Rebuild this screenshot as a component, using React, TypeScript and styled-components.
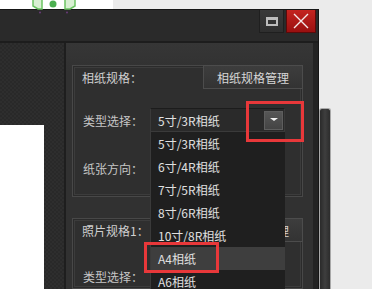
import styled, { createGlobalStyle } from "styled-components";

const GlobalStyle = createGlobalStyle`
  html, body {
    margin: 0;
    padding: 0;
  }
  body {
    background: #ececec;
    font-family: "Noto Sans CJK SC", "Noto Sans", sans-serif;
    font-size: 12px;
  }
`;

const paperSizes = [
  "5寸/3R相纸",
  "6寸/4R相纸",
  "7寸/5R相纸",
  "8寸/6R相纸",
  "10寸/8R相纸",
  "A4相纸",
  "A6相纸",
];

export default function App() {
  return (
    <>
      <GlobalStyle />
      <Desktop>
        <TopStrip>
          <WhiteArea />
        </TopStrip>
        <DesktopIcons width="50" height="15" viewBox="0 0 50 15">
          <path d="M3 0 V6 L8 9 H12 V0" fill="#d8f0d2" stroke="#6cc463" strokeWidth="1.5" />
          <circle cx="23" cy="4" r="3.5" fill="#4caf50" />
          <path d="M35 0 V9 H40 L45 6 V0" fill="#d8f0d2" stroke="#6cc463" strokeWidth="1.5" />
          <circle cx="10" cy="12.5" r="1" fill="#6a3c7a" />
          <circle cx="37" cy="12.5" r="1" fill="#6a3c7a" />
        </DesktopIcons>
        <Main>
          <Window>
            <TitleBar>
              <MaxButton>
                <MaxIcon />
              </MaxButton>
              <CloseButton>
                <svg width="16" height="16" viewBox="0 0 16 16">
                  <path d="M1 1 L15 15 M15 1 L1 15" stroke="#f4eaea" strokeWidth="1.4" />
                </svg>
              </CloseButton>
            </TitleBar>
            <Body>
              <Sidebar>
                <Preview />
              </Sidebar>
              <Panel>
                <GroupBox>
                  <GroupHeader>
                    <GroupTitle>相纸规格：</GroupTitle>
                    <TabButton>相纸规格管理</TabButton>
                  </GroupHeader>
                  <FieldRow $top={19}>
                    <Label>类型选择：</Label>
                    <Combo>
                      <ComboText>5寸/3R相纸</ComboText>
                      <ArrowButton>
                        <svg width="8" height="4" viewBox="0 0 8 4">
                          <path d="M0 0 H8 L4 3 Z" fill="#f0f0f0" />
                        </svg>
                      </ArrowButton>
                      <Highlight $left={95} $top={-8} $width={58} $height={41} />
                      <DropList>
                        {paperSizes.map((size) => (
                          <DropItem key={size} $selected={size === "A4相纸"}>
                            {size}
                            {size === "A4相纸" && (
                              <Highlight $left={-7} $top={-5} $width={75} $height={31} />
                            )}
                          </DropItem>
                        ))}
                      </DropList>
                    </Combo>
                  </FieldRow>
                  <FieldRow $top={24}>
                    <Label>纸张方向：</Label>
                  </FieldRow>
                </GroupBox>
                <GroupBox $second>
                  <GroupHeader>
                    <GroupTitle>照片规格1：</GroupTitle>
                    <TabButton>照片规格管理</TabButton>
                  </GroupHeader>
                  <FieldRow $top={22}>
                    <Label>类型选择：</Label>
                  </FieldRow>
                </GroupBox>
              </Panel>
            </Body>
          </Window>
          <Outside>
            <ScrollRail />
          </Outside>
        </Main>
      </Desktop>
    </>
  );
}

const Desktop = styled.div`
  position: relative;
  width: 372px;
  height: 289px;
  overflow: hidden;
  display: flex;
  flex-direction: column;
  background: #ebebeb;
`;

const TopStrip = styled.div`
  height: 9px;
  flex: none;
  display: flex;
`;

const WhiteArea = styled.div`
  width: 113px;
  background: #ffffff;
`;

const DesktopIcons = styled.svg`
  position: absolute;
  left: 30px;
  top: 0;
`;

const Main = styled.div`
  flex: 1;
  min-height: 0;
  display: flex;
`;

const Window = styled.div`
  width: 319px;
  flex: none;
  box-sizing: border-box;
  display: flex;
  flex-direction: column;
  background: #2a2a2a;
  border-top: 1px solid #161616;
  border-right: 1px solid #151515;
`;

const TitleBar = styled.div`
  height: 31px;
  flex: none;
  display: flex;
  justify-content: flex-end;
  align-items: flex-start;
  gap: 2px;
  padding-right: 2px;
  background: #2a2a2a;
  border-bottom: 2px solid #1d1d1d;
`;

const MaxButton = styled.div`
  width: 25px;
  height: 23px;
  box-sizing: border-box;
  display: flex;
  align-items: center;
  justify-content: center;
  background: linear-gradient(#3a3a3a, #2f2f2f);
  border: 1px solid #1f1f1f;
  border-top: none;
`;

const MaxIcon = styled.div`
  width: 12px;
  height: 9px;
  box-sizing: border-box;
  border: 2px solid #bdbdbd;
  border-top-width: 3px;
`;

const CloseButton = styled.div`
  width: 30px;
  height: 23px;
  box-sizing: border-box;
  display: flex;
  align-items: center;
  justify-content: center;
  background: linear-gradient(#c42420, #9a1010);
  border: 1px solid #5a0a0a;
  border-top: none;
`;

const Body = styled.div`
  flex: 1;
  min-height: 0;
  display: flex;
`;

const Sidebar = styled.div`
  width: 64px;
  flex: none;
  display: flex;
  flex-direction: column;
  background: repeating-conic-gradient(#2e2e2e 0 25%, #292929 0 50%) 0 0 / 4px 4px;
  border-right: 2px solid #1e1e1e;
`;

const Preview = styled.div`
  width: 44px;
  flex: 1;
  margin-top: 82px;
  background: #ffffff;
`;

const Panel = styled.div`
  flex: 1;
  display: flex;
  flex-direction: column;
  gap: 21px;
  padding: 22px 10px 0 6px;
  background: linear-gradient(#363636, #313131 30px);
  border-right: 5px solid #232323;
`;

const GroupBox = styled.div<{ $second?: boolean }>`
  flex: none;
  height: ${(p) => (p.$second ? "auto" : "132px")};
  box-sizing: border-box;
  border: 1px solid #484848;
  box-shadow: inset 0 0 0 1px #2b2b2b, inset 0 0 0 2px #3c3c3c;
  background: #2f2f2f;
`;

const GroupHeader = styled.div`
  height: 24px;
  display: flex;
  align-items: center;
  justify-content: space-between;
  margin: -1px -1px 0 0;
`;

const GroupTitle = styled.span`
  padding-left: 9px;
  color: #cfcfcf;
`;

const TabButton = styled.div`
  width: 100px;
  height: 24px;
  box-sizing: border-box;
  display: flex;
  align-items: center;
  justify-content: center;
  color: #d6d6d6;
  background: linear-gradient(#3d3d3d, #333333);
  border: 1px solid #4c4c4c;
`;

const FieldRow = styled.div<{ $top: number }>`
  height: 24px;
  margin-top: ${(p) => p.$top}px;
  display: flex;
  align-items: center;
`;

const Label = styled.span`
  width: 67px;
  padding-left: 10px;
  color: #c6c6c6;
`;

const Combo = styled.div`
  position: relative;
  width: 135px;
  height: 24px;
  box-sizing: border-box;
  display: flex;
  align-items: center;
  justify-content: space-between;
  padding: 0 1px 0 7px;
  background: #2a2a2a;
  border: 1px solid #3a3a3a;
  border-top-color: #1c1c1c;
`;

const ComboText = styled.span`
  color: #e2e2e2;
`;

const ArrowButton = styled.div`
  width: 19px;
  height: 19px;
  box-sizing: border-box;
  display: flex;
  align-items: center;
  justify-content: center;
  background: linear-gradient(#565656, #444444);
  border: 1px solid #5e5e5e;
`;

const Highlight = styled.div<{ $left: number; $top: number; $width: number; $height: number }>`
  position: absolute;
  left: ${(p) => p.$left}px;
  top: ${(p) => p.$top}px;
  width: ${(p) => p.$width}px;
  height: ${(p) => p.$height}px;
  box-sizing: border-box;
  border: 3px solid #e8383a;
  pointer-events: none;
  z-index: 3;
`;

const DropList = styled.div`
  position: absolute;
  left: -1px;
  top: 23px;
  width: 134px;
  background: #1f1f1f;
  border-left: 1px solid #3a3a3a;
  z-index: 2;
`;

const DropItem = styled.div<{ $selected?: boolean }>`
  position: relative;
  height: 23px;
  line-height: 23px;
  padding-left: 7px;
  color: #e0e0e0;
  background: ${(p) => (p.$selected ? "#3e3e3e" : "transparent")};
`;

const Outside = styled.div`
  flex: 1;
  display: flex;
`;

const ScrollRail = styled.div`
  width: 12px;
  margin-top: 99px;
  box-sizing: border-box;
  border: 1px solid #a8a8a8;
  border-bottom: none;
  border-radius: 3px 3px 0 0;
  background: linear-gradient(90deg, #2a2a2a, #3e3e3e 50%, #2c2c2c);
`;
